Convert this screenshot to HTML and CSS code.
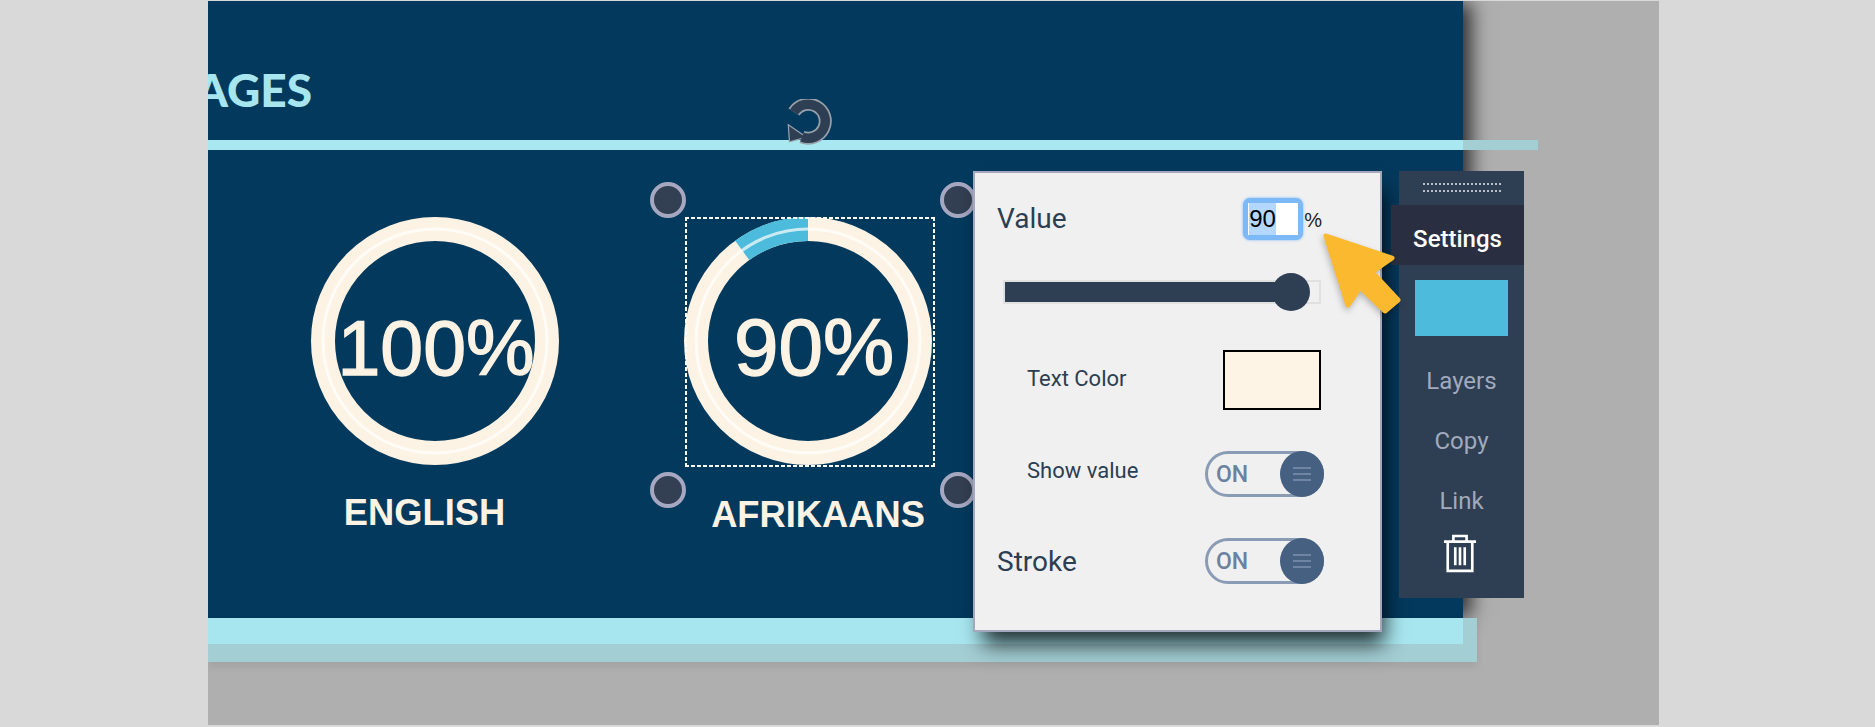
FILE: index.html
```html
<!DOCTYPE html>
<html lang="en">
<head>
    <meta charset="UTF-8">
    <meta name="viewport" content="width=device-width, initial-scale=1.0">
    <title>Slide Editor</title>
    <link rel="stylesheet" href="styles.css">
</head>
<body>
    <div class="canvas">
        <div class="slide">
            <div class="slide-head">
                <h1>LANGUAGES</h1>
            </div>
            <div class="rule"><div class="rule-inner"></div></div>
            <div class="rings">
                <div class="ring-item">
                    <svg class="ring" viewBox="0 0 248 248">
                        <circle class="ring-track" cx="124" cy="124" r="112"/>
                        <circle class="ring-shine" cx="124" cy="124" r="112"/>
                        <text class="ring-text ring-text-long" x="125" y="158">100%</text>
                    </svg>
                    <div class="ring-label ring-label-english">ENGLISH</div>
                </div>
                <div class="ring-item">
                    <svg class="ring" viewBox="0 0 248 248">
                        <circle class="ring-track" cx="124" cy="124" r="112"/>
                        <path class="ring-value" d="M124 12 A112 112 0 0 0 58.2 33.4"/>
                        <circle class="ring-shine" cx="124" cy="124" r="112"/>
                        <text class="ring-text" x="130" y="158">90%</text>
                    </svg>
                    <div class="ring-label ring-label-afrikaans">AFRIKAANS</div>
                </div>
            </div>
        </div>
        <div class="slide-foot"><div class="slide-foot-inner"></div></div>

        <!-- selection around the second ring -->
        <div class="selection"></div>
        <div class="handle handle-tl"></div>
        <div class="handle handle-tr"></div>
        <div class="handle handle-bl"></div>
        <div class="handle handle-br"></div>
        <svg class="rotate" viewBox="0 0 46 46">
            <g class="rotate-outline">
                <path d="M7 13 A17 17 0 1 1 15 38"/>
                <path d="M2 27 L3 42 L18 38 Z"/>
            </g>
            <g class="rotate-main">
                <path d="M7 13 A17 17 0 1 1 15 38"/>
                <path d="M2 27 L3 42 L18 38 Z"/>
            </g>
        </svg>

        <div class="panel">
            <div class="row row-value">
                <span class="label-big">Value</span>
                <div class="value-box"><div class="value-input"><span class="value-selected">90</span></div></div>
                <span class="value-unit">%</span>
            </div>
            <div class="slider">
                <div class="slider-fill" style="width: 87.6%"></div>
                <div class="slider-thumb"></div>
            </div>
            <div class="row row-color">
                <span class="label-small">Text Color</span>
                <div class="swatch"></div>
            </div>
            <div class="row row-show">
                <span class="label-small">Show value</span>
                <div class="toggle"><span>ON</span><div class="knob"><div class="knob-lines"></div></div></div>
            </div>
            <div class="row row-stroke">
                <span class="label-big">Stroke</span>
                <div class="toggle"><span>ON</span><div class="knob"><div class="knob-lines"></div></div></div>
            </div>
        </div>

        <div class="toolbar">
            <div class="grip"></div>
            <div class="tool-tab">Settings</div>
            <div class="tool-color"></div>
            <div class="tool-link tool-layers">Layers</div>
            <div class="tool-link tool-copy">Copy</div>
            <div class="tool-link tool-last">Link</div>
            <svg class="trash" viewBox="0 0 36 42">
                <path d="M1 9 H35 M11 9 V3 H25 V9 M5 9 V40 H31 V9 M13 15 V34 M18 15 V34 M23 15 V34"/>
            </svg>
        </div>

        <svg class="cursor" viewBox="0 0 86 90">
            <polygon points="6,6 72,28 52,42 78,70 65,81 40,57 28,75"/>
        </svg>
    </div>
</body>
</html>
```

FILE: styles.css
```css
* {
    box-sizing: border-box;
}
html, body {
    height: 100%;
}
body {
    margin: 0;
    padding: 1px 0 2px 208px;
    background-color: #d9d9d9;
    font-family: Roboto, Arial, sans-serif;
    overflow: hidden;
}
.canvas {
    position: relative;
    width: 1451px;
    height: 724px;
    background-color: #afafaf;
    overflow: hidden;
}

/* slide */
.slide {
    height: 617px;
    width: 1255px;
    background-color: #03395c;
    box-shadow: 10px 0 18px -2px rgba(0, 0, 0, 0.75);
}
.slide-head {
    display: flex;
    justify-content: flex-end;
    width: 104px;
    height: 139px;
    padding-top: 61px;
}
.slide-head h1 {
    margin: 0;
    font-family: Lato, sans-serif;
    font-size: 46px;
    font-weight: 900;
    line-height: 55px;
    color: #a8e6ef;
    white-space: nowrap;
}
.rule {
    position: relative;
    width: 1330px;
    height: 10px;
    background-color: #a3ced4;
}
.rule-inner {
    width: 1255px;
    height: 10px;
    background-color: #a9e8f1;
}
.rings {
    display: flex;
    gap: 125px;
    padding: 67px 0 0 103px;
}
.ring-item {
    display: flex;
    flex-direction: column;
    align-items: center;
    width: 248px;
}
.ring {
    width: 248px;
    height: 248px;
}
.ring-track {
    fill: none;
    stroke: #fdf3e4;
    stroke-width: 24;
}
.ring-value {
    fill: none;
    stroke: #4dbbdb;
    stroke-width: 24;
}
.ring-shine {
    fill: none;
    stroke: rgba(255, 255, 255, 0.7);
    stroke-width: 3;
}
.ring-text {
    fill: #fdf3e4;
    stroke: #fdf3e4;
    stroke-width: 1.4;
    font-family: "Liberation Sans", Arial, sans-serif;
    font-size: 80px;
    text-anchor: middle;
}
.ring-text-long {
    font-size: 77px;
}
.ring-label {
    font-family: "Liberation Sans", Arial, sans-serif;
    font-size: 36.3px;
    font-weight: bold;
    line-height: 41px;
    color: #fdf3e4;
    white-space: nowrap;
}
.ring-label-english {
    margin: 27px 21px 0 0;
}
.ring-label-afrikaans {
    margin: 29px 0 0 20px;
}
.slide-foot {
    position: relative;
    width: 1269px;
    height: 44px;
    background-color: #a3ced4;
    box-shadow: 0 4px 8px rgba(0, 0, 0, 0.08);
}
.slide-foot-inner {
    width: 1255px;
    height: 26px;
    background-color: #a8e6ef;
}

/* selection */
.selection {
    position: absolute;
    left: 477px;
    top: 216px;
    width: 250px;
    height: 250px;
    background:
        linear-gradient(90deg, #fff 60%, transparent 0) 0 0 / 6px 2px repeat-x,
        linear-gradient(90deg, #fff 60%, transparent 0) 0 100% / 6px 2px repeat-x,
        linear-gradient(#fff 60%, transparent 0) 0 0 / 2px 6px repeat-y,
        linear-gradient(#fff 60%, transparent 0) 100% 0 / 2px 6px repeat-y;
}
.handle {
    position: absolute;
    width: 36px;
    height: 36px;
    background-color: #333f52;
    border: 4px solid #a6a8c2;
    border-radius: 50%;
}
.handle-tl { left: 442px; top: 181px; }
.handle-tr { left: 732px; top: 181px; }
.handle-bl { left: 442px; top: 471px; }
.handle-br { left: 732px; top: 471px; }
.rotate {
    position: absolute;
    left: 579px;
    top: 98px;
    width: 46px;
    height: 46px;
}
.rotate-outline path {
    fill: #97a0ab;
    stroke: #97a0ab;
    stroke-width: 2.5;
}
.rotate-outline path:first-child {
    fill: none;
    stroke-width: 13;
}
.rotate-main path {
    fill: #2e3f53;
    stroke: none;
}
.rotate-main path:first-child {
    fill: none;
    stroke: #2e3f53;
    stroke-width: 9.5;
}

/* settings panel */
.panel {
    position: absolute;
    left: 765px;
    top: 170px;
    width: 409px;
    height: 461px;
    padding: 25px 58px 0 22px;
    background-color: #f0f0f0;
    border: 2px solid #a3a8bf;
    box-shadow: 6px 16px 20px -4px rgba(0, 0, 0, 0.8);
    color: #2b3e52;
}
.row {
    display: flex;
    align-items: center;
}
.label-big {
    font-size: 28px;
}
.label-small {
    margin-left: 30px;
    font-size: 22px;
}
.row-value {
    height: 42px;
}
.row-value .label-big {
    margin-top: -2px;
}
.value-box {
    margin-left: auto;
    width: 60px;
    height: 42px;
    padding: 5px;
    background-color: #7db8f7;
    border-radius: 7px;
    box-shadow: 0 0 3px #7db8f7;
}
.value-input {
    height: 32px;
    padding-left: 1px;
    background-color: #fff;
    color: #000;
    font-family: "Liberation Sans", Arial, sans-serif;
    font-size: 24px;
    line-height: 32px;
}
.value-selected {
    display: inline-block;
    background-color: #b3d7ff;
}
.value-unit {
    margin-left: 1px;
    margin-top: 3px;
    font-family: "Liberation Sans", Arial, sans-serif;
    font-size: 20px;
    color: #222;
}
.slider {
    display: flex;
    align-items: center;
    width: 318px;
    height: 24px;
    margin: 40px 0 0 6px;
    border: 2px solid #e0e0e0;
}
.slider-fill {
    height: 100%;
    background-color: #2e3f53;
}
.slider-thumb {
    flex-shrink: 0;
    width: 38px;
    height: 38px;
    margin-left: -8px;
    background-color: #2e3f53;
    border-radius: 50%;
}
.row-color {
    height: 60px;
    margin-top: 46px;
}
.row-color .label-small {
    margin-top: -3px;
}
.swatch {
    width: 98px;
    height: 60px;
    margin-left: auto;
    margin-right: 1px;
    background-color: #fef4e6;
    border: 2px solid #000;
}
.row-show {
    height: 46px;
    margin-top: 41px;
}
.row-show .label-small {
    margin-top: -7px;
}
.row-stroke {
    height: 46px;
    margin-top: 41px;
}
.toggle {
    display: flex;
    align-items: center;
    justify-content: space-between;
    width: 119px;
    height: 46px;
    margin-left: auto;
    margin-right: -2px;
    padding-left: 8px;
    border: 3px solid #8a9bb5;
    border-radius: 23px;
    color: #6a819f;
    font-size: 23px;
    font-weight: 500;
}
.knob {
    display: flex;
    align-items: center;
    justify-content: center;
    flex-shrink: 0;
    width: 44px;
    height: 46px;
    margin: -3px -3px -3px 0;
    background-color: #466081;
    border-radius: 50%;
}
.knob-lines {
    width: 18px;
    height: 14px;
    background: repeating-linear-gradient(#6f85a3 0, #6f85a3 2px, transparent 2px, transparent 6px);
}

/* right toolbar */
.toolbar {
    position: absolute;
    left: 1191px;
    top: 170px;
    display: flex;
    flex-direction: column;
    align-items: center;
    width: 125px;
    height: 427px;
    background-color: #2e3f53;
    color: #a2a9bd;
    font-size: 24px;
}
.grip {
    width: 78px;
    height: 9px;
    margin-top: 12px;
    border-top: 2px dotted #b8bfc8;
    border-bottom: 2px dotted #b8bfc8;
}
.tool-tab {
    width: 133px;
    height: 60px;
    margin: 13px 0 0 -8px;
    padding-top: 4px;
    background-color: #292f41;
    color: #fff;
    font-weight: 500;
    line-height: 60px;
    text-align: center;
}
.tool-color {
    width: 93px;
    height: 56px;
    margin-top: 15px;
    margin-left: -1px;
    background-color: #4dbbdb;
}
.tool-link {
    line-height: 30px;
}
.tool-layers {
    margin-top: 30px;
}
.tool-copy {
    margin-top: 30px;
}
.tool-last {
    margin-top: 30px;
}
.trash {
    width: 34px;
    height: 40px;
    margin-top: 17px;
    margin-left: -3px;
    fill: none;
    stroke: #fff;
    stroke-width: 2.8;
}

/* pointer arrow */
.cursor {
    position: absolute;
    left: 1112px;
    top: 229px;
    width: 86px;
    height: 90px;
    filter: drop-shadow(-1px 3px 3px rgba(0, 0, 0, 0.25));
}
.cursor polygon {
    fill: #fbb92f;
    stroke: #fbb92f;
    stroke-width: 5;
    stroke-linejoin: round;
}
```
